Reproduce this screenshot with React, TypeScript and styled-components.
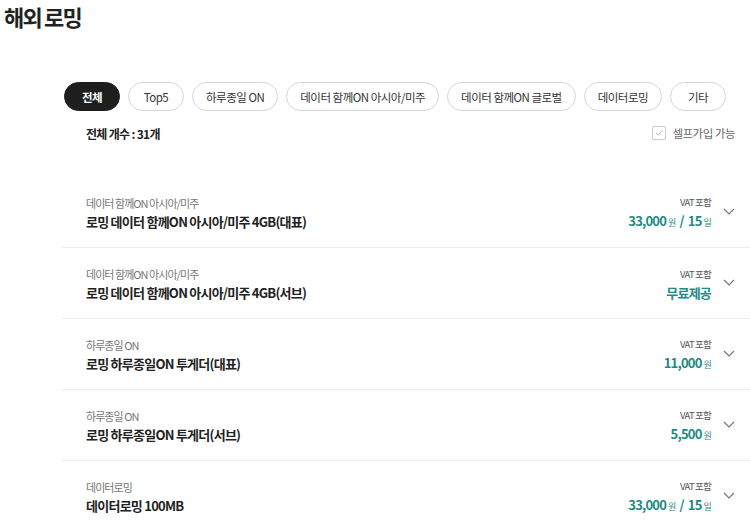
import React from "react";
import styled, { createGlobalStyle } from "styled-components";

const GlobalStyle = createGlobalStyle`
  body {
    margin: 0;
    background: #fff;
    font-family: "Noto Sans CJK KR", "Noto Sans", sans-serif;
    color: #222;
    overflow: hidden;
  }
`;

interface IPlan {
  category: string;
  name: string;
  price?: string;
  days?: string;
  free?: boolean;
}

const FILTERS = [
  "전체",
  "Top5",
  "하루종일 ON",
  "데이터 함께ON 아시아/미주",
  "데이터 함께ON 글로벌",
  "데이터로밍",
  "기타",
];

const PLANS: IPlan[] = [
  {
    category: "데이터 함께ON 아시아/미주",
    name: "로밍 데이터 함께ON 아시아/미주 4GB(대표)",
    price: "33,000",
    days: "15",
  },
  {
    category: "데이터 함께ON 아시아/미주",
    name: "로밍 데이터 함께ON 아시아/미주 4GB(서브)",
    free: true,
  },
  {
    category: "하루종일 ON",
    name: "로밍 하루종일ON 투게더(대표)",
    price: "11,000",
  },
  {
    category: "하루종일 ON",
    name: "로밍 하루종일ON 투게더(서브)",
    price: "5,500",
  },
  {
    category: "데이터로밍",
    name: "데이터로밍 100MB",
    price: "33,000",
    days: "15",
  },
];

const ChevronDown = () => (
  <svg width="12" height="7" viewBox="0 0 12 7" fill="none">
    <path d="M1 1l5 5 5-5" stroke="#777" strokeWidth="1.2" />
  </svg>
);

const CheckMark = () => (
  <svg width="8" height="6" viewBox="0 0 8 6" fill="none">
    <path d="M1 3l2 2 4-4" stroke="#bbb" strokeWidth="1" />
  </svg>
);

const App = () => {
  return (
    <>
      <GlobalStyle />
      <Page>
        <Title>해외 로밍</Title>
        <Content>
          <Filters>
            {FILTERS.map((label, i) => (
              <Pill key={label} $active={i === 0}>
                {label}
              </Pill>
            ))}
          </Filters>
          <CountRow>
            <Count>전체 개수 : 31개</Count>
            <SelfJoin>
              <CheckBox>
                <CheckMark />
              </CheckBox>
              셀프가입 가능
            </SelfJoin>
          </CountRow>
          <List>
            {PLANS.map((plan) => (
              <Row key={plan.name}>
                <Info>
                  <Category>{plan.category}</Category>
                  <Name>{plan.name}</Name>
                </Info>
                <PriceBox>
                  <Vat>VAT 포함</Vat>
                  <Price>
                    {plan.free ? (
                      "무료제공"
                    ) : (
                      <>
                        {plan.price}
                        <Unit>원</Unit>
                        {plan.days && (
                          <>
                            <Slash>/</Slash>
                            {plan.days}
                            <Unit>일</Unit>
                          </>
                        )}
                      </>
                    )}
                  </Price>
                </PriceBox>
                <Toggle>
                  <ChevronDown />
                </Toggle>
              </Row>
            ))}
          </List>
        </Content>
      </Page>
    </>
  );
};

export default App;

const Page = styled.div`
  width: 750px;
  height: 530px;
  overflow: hidden;
`;

const Title = styled.h1`
  margin: 0;
  padding: 0 4px;
  font-size: 22px;
  line-height: 32px;
  font-weight: 700;
  letter-spacing: -1.8px;
  color: #222;
`;

const Content = styled.div`
  margin-left: 62px;
  margin-top: 50px;
`;

const Filters = styled.div`
  display: flex;
  flex-direction: row;
  gap: 8px;
  padding-left: 2px;
`;

const Pill = styled.button<{ $active?: boolean }>`
  height: 29px;
  min-width: 56px;
  padding: 0 13px;
  border-radius: 15px;
  border: 1px solid ${({ $active }) => ($active ? "#1e1e1e" : "#d6d6d6")};
  background: ${({ $active }) => ($active ? "#1e1e1e" : "#fff")};
  color: ${({ $active }) => ($active ? "#fff" : "#333")};
  font-family: inherit;
  font-size: 11.5px;
  font-weight: ${({ $active }) => ($active ? 700 : 400)};
  letter-spacing: -0.5px;
  white-space: nowrap;
`;

const CountRow = styled.div`
  display: flex;
  flex-direction: row;
  justify-content: space-between;
  align-items: center;
  margin-top: 12px;
  padding: 0 15px 0 24px;
  height: 20px;
`;

const Count = styled.div`
  font-size: 12px;
  font-weight: 700;
  letter-spacing: -0.7px;
  color: #222;
`;

const SelfJoin = styled.label`
  display: flex;
  align-items: center;
  gap: 6px;
  font-size: 11.5px;
  letter-spacing: -0.5px;
  color: #666;
`;

const CheckBox = styled.span`
  display: flex;
  align-items: center;
  justify-content: center;
  width: 12px;
  height: 12px;
  border: 1px solid #ccc;
  border-radius: 2px;
`;

const List = styled.div`
  margin-top: 34px;
`;

const Row = styled.div`
  display: flex;
  flex-direction: row;
  align-items: center;
  height: 70px;
  border-bottom: 1px solid #ececec;
  padding: 0 15px 0 24px;
`;

const Info = styled.div`
  display: flex;
  flex-direction: column;
  flex: 1;
  padding-top: 2px;
`;

const Category = styled.div`
  font-size: 11px;
  line-height: 16px;
  letter-spacing: -0.95px;
  color: #777;
`;

const Name = styled.div`
  font-size: 13px;
  line-height: 21px;
  font-weight: 700;
  letter-spacing: -0.75px;
  color: #222;
`;

const PriceBox = styled.div`
  display: flex;
  flex-direction: column;
  align-items: flex-end;
  padding-top: 2px;
`;

const Vat = styled.div`
  font-size: 9.5px;
  line-height: 16px;
  letter-spacing: -0.8px;
  color: #555;
`;

const Price = styled.div`
  font-size: 13px;
  line-height: 21px;
  font-weight: 700;
  letter-spacing: -0.8px;
  color: #1e8a83;
`;

const Unit = styled.span`
  font-size: 9px;
  font-weight: 400;
  margin-left: 2px;
`;

const Slash = styled.span`
  margin: 0 4px;
`;

const Toggle = styled.div`
  display: flex;
  align-items: center;
  justify-content: center;
  width: 12px;
  margin-left: 12px;
  padding-bottom: 1px;
`;
